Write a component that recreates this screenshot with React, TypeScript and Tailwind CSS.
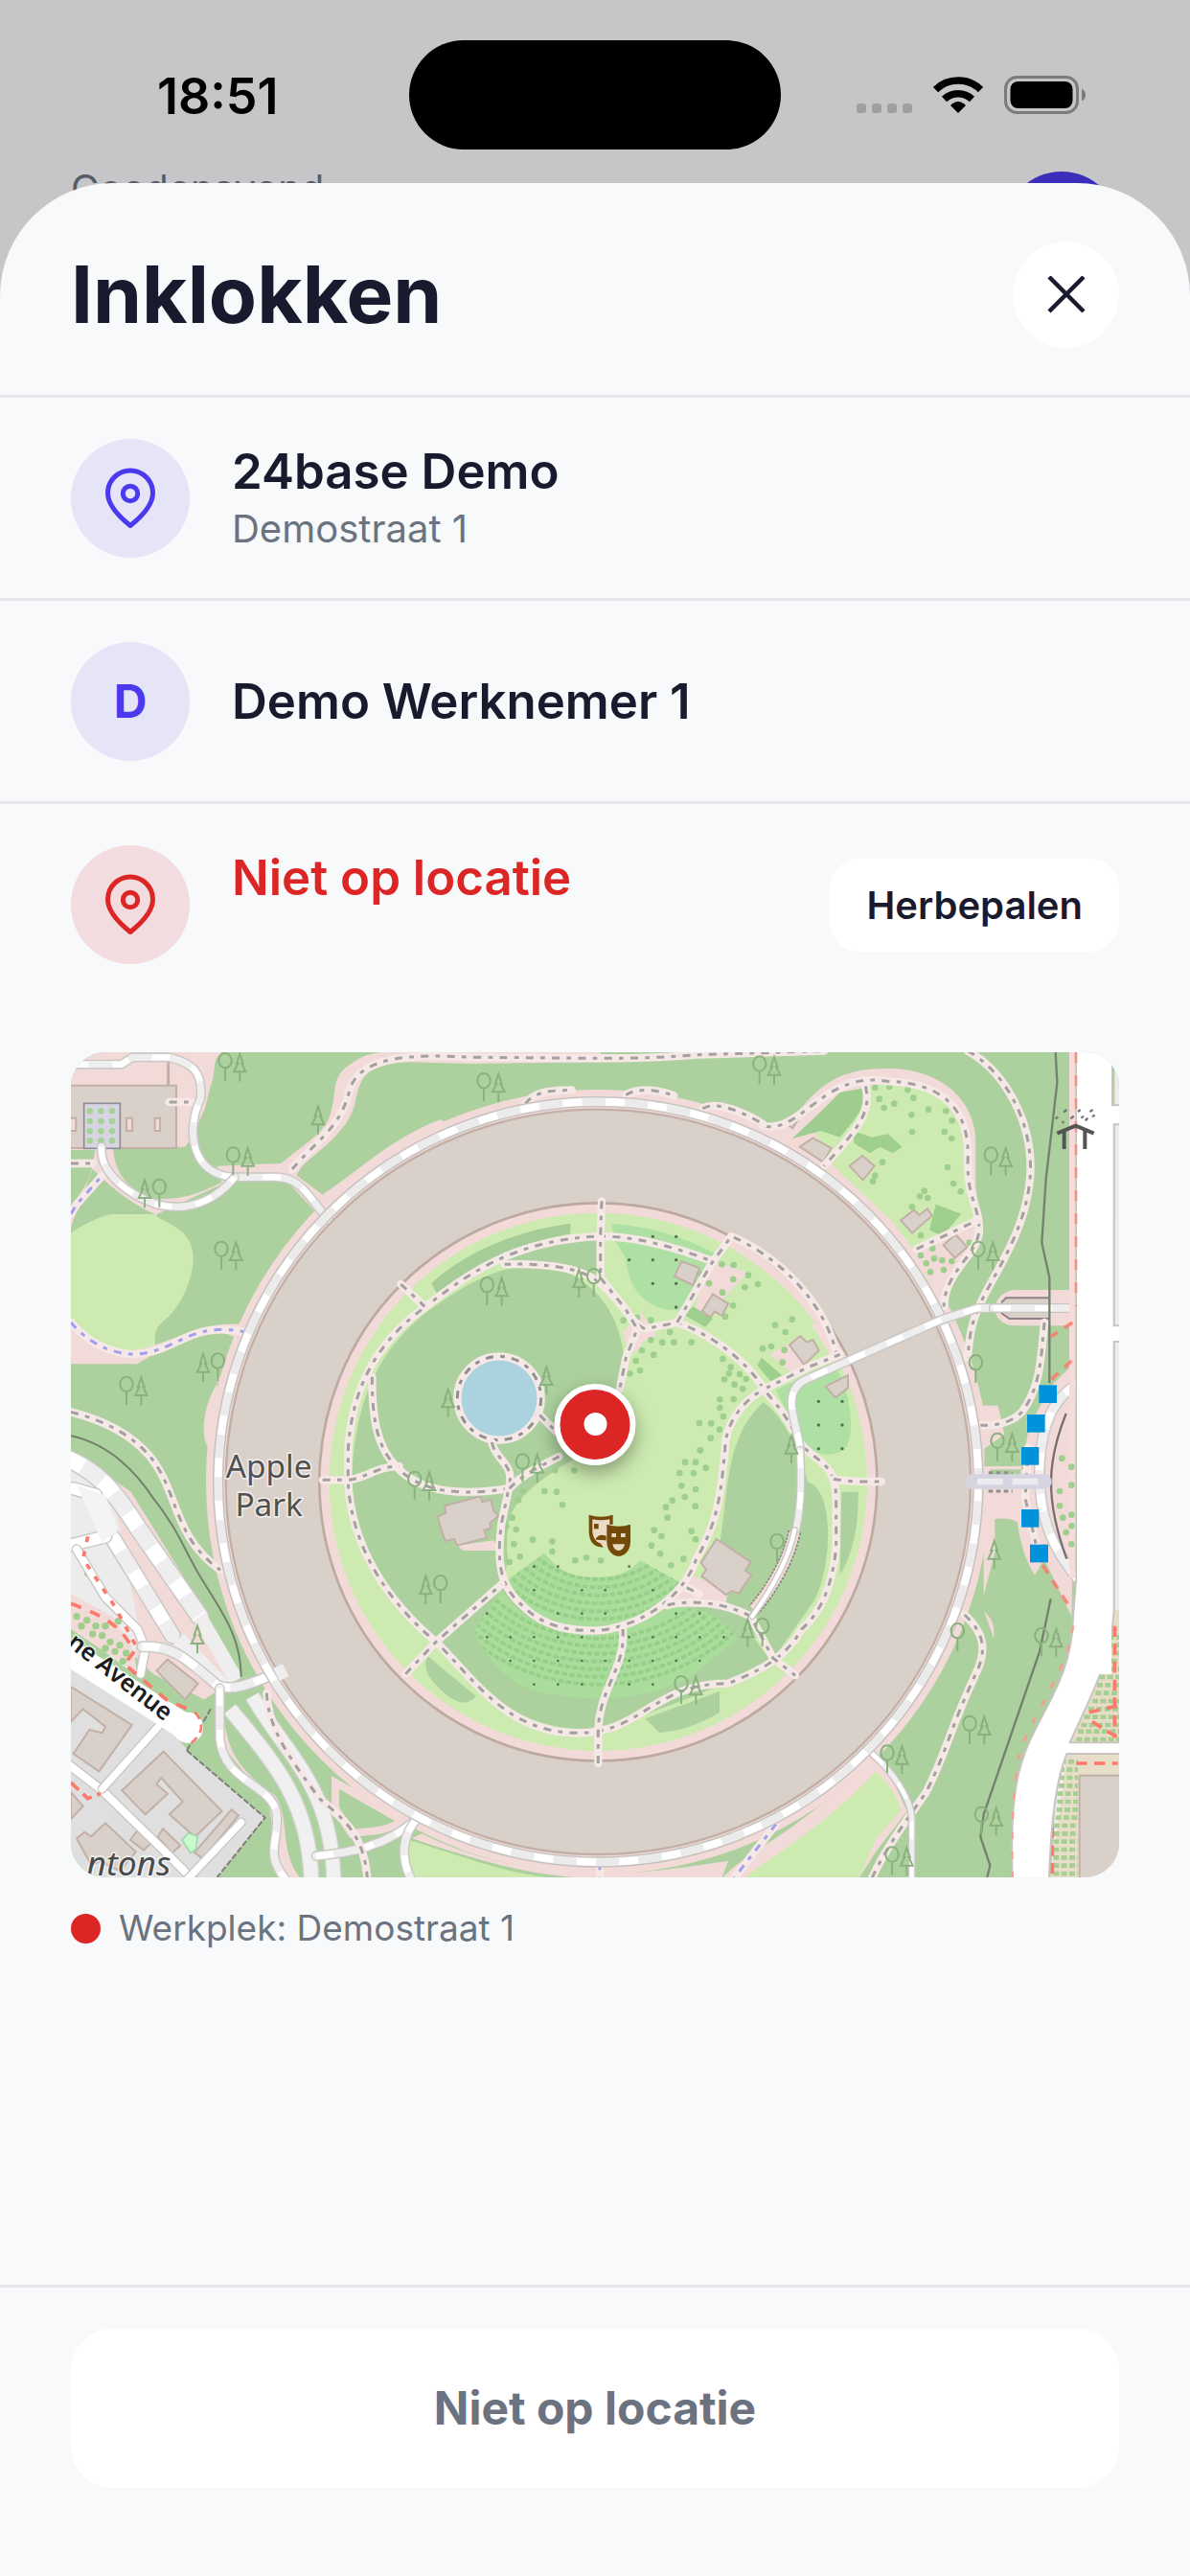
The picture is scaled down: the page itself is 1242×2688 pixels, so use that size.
import type { ReactNode } from "react";

const WOOD = "#add19e";
const GRASS = "#cdebb0";
const PLAZA = "#f2dad9";
const BUILDING = "#d9d0c9";
const BUILDING_EDGE = "#c2b0a6";
const GARDEN = "#aedfa3";
const SHRUB = "#9fcf8c";

/* ---------- Map primitives ---------- */

function Footpath({ d, color = "#8f8f8f" }: { d: string; color?: string }) {
  return (
    <>
      <path d={d} fill="none" stroke="#f5e8e6" strokeWidth="25" strokeLinecap="round" strokeLinejoin="round" />
      <path d={d} fill="none" stroke={color} strokeWidth="9" strokeDasharray="24 22 14 22" opacity="0.8" />
    </>
  );
}

function Road({ d, w = 24, dashed = true }: { d: string; w?: number; dashed?: boolean }) {
  return (
    <>
      <path d={d} fill="none" stroke="#c9c6c3" strokeWidth={w + 8} strokeLinecap="round" strokeLinejoin="round" />
      <path d={d} fill="none" stroke={dashed ? "#eeeeee" : "#ffffff"} strokeWidth={w} strokeLinecap="round" strokeLinejoin="round" />
      {dashed && <path d={d} fill="none" stroke="#ffffff" strokeWidth={w - 4} strokeDasharray="55 75" />}
    </>
  );
}

function Oak({ x, y }: { x: number; y: number }) {
  return (
    <path
      d={`M${x + 23} ${y + 2}a20 23 0 1 0 .1 0M${x + 23} ${y + 48}v41`}
      fill="none"
      stroke="#8bb27e"
      strokeWidth="6"
    />
  );
}

function Pine({ x, y }: { x: number; y: number }) {
  return (
    <path
      d={`M${x + 23} ${y + 4}l-10 30h4l-13 26h38l-13 -26h4zM${x + 23} ${y + 60}v31`}
      fill="none"
      stroke="#8bb27e"
      strokeWidth="6"
    />
  );
}

function Trees({ x, y, flip = false }: { x: number; y: number; flip?: boolean }) {
  return (
    <>
      <Oak x={flip ? x + 46 : x} y={y} />
      <Pine x={flip ? x : x + 46} y={y} />
    </>
  );
}

function Dots({ at, r = 10, fill = SHRUB }: { at: number[][]; r?: number; fill?: string }) {
  return (
    <g fill={fill}>
      {at.map(([x, y]) => (
        <circle key={`${x}-${y}`} cx={x} cy={y} r={r} />
      ))}
    </g>
  );
}

function Building({ d }: { d: string }) {
  return <path d={d} fill={BUILDING} stroke={BUILDING_EDGE} strokeWidth="6" />;
}

const seatRows = [305, 330, 355, 380, 405, 430, 490, 514, 538, 562, 586, 610, 634];
const coverDots = [
  [352, 404], [427, 404], [650, 404], [352, 478], [502, 478], [575, 478], [724, 478], [205, 551], [427, 551], [502, 551],
  [575, 551], [797, 551], [871, 551], [205, 625], [278, 625], [352, 625], [427, 625], [502, 625], [650, 625], [724, 625],
  [797, 625], [871, 625], [946, 625], [278, 699], [352, 699], [427, 699], [502, 699], [575, 699], [650, 699], [724, 699],
  [797, 699], [871, 699], [352, 773], [427, 773], [502, 773], [650, 773], [724, 773],
];

function ParkMap() {
  return (
    <svg
      viewBox="42 54 3282 2583"
      preserveAspectRatio="xMidYMid slice"
      className="block h-[861px] w-full"
      role="img"
      aria-label="Kaart van Apple Park"
    >
      <rect x="42" y="54" width="3282" height="2583" fill={WOOD} />

      {/* north-west gardens */}
      <path d="M42 54H515C480 80 500 110 478 165L462 230 420 320 400 350 175 356C178 430 220 480 290 512 400 520 450 490 515 462L500 410 700 402C760 350 830 310 850 260 880 180 850 130 920 90 950 65 980 60 1010 54H1700V85L1300 90 1100 85C960 90 950 130 930 220 900 330 760 390 750 440L830 500C950 420 1050 320 1200 265L1290 320 870 600 720 700C660 780 600 850 580 910L560 950C500 910 420 940 300 1000L250 1030H42V620Q100 580 165 562H310C250 540 180 490 110 420L42 600Z" fill={PLAZA} />
      <path d="M42 360H118L105 430C90 480 60 500 42 560Z" fill={WOOD} />
      <path d="M515 400C560 380 640 360 700 402Z" fill={WOOD} />
      <path d="M310 562L540 455 720 460 815 560C700 680 620 790 570 905 460 900 400 940 305 970Z" fill={WOOD} />
      <path d="M42 620Q100 580 165 562H300C350 595 425 610 425 700 425 760 390 840 350 880 310 910 302 930 305 968 150 1030 80 960 42 900Z" fill={GRASS} />
      <path d="M42 54H440V160H42Z" fill={PLAZA} />
      <Building d="M30 158H372V354H30Z" />
      <rect x="83" y="214" width="113" height="141" fill="#d8d5e3" stroke="#8d8b97" strokeWidth="5" />
      <Dots
        r={10}
        fill="#a5d296"
        at={[[101, 238], [136, 238], [171, 238], [101, 270], [136, 270], [171, 270], [101, 301], [136, 301], [171, 301], [101, 331], [136, 331], [171, 331]]}
      />
      <g fill={PLAZA} stroke={BUILDING_EDGE} strokeWidth="6">
        <path d="M36 260h22v40H36zM216 260h18v40h-18zM305 260h16v40h-16z" />
      </g>
      <path d="M347 85V158" stroke={BUILDING_EDGE} strokeWidth="9" />

      {/* pink verge around the ring */}
      <circle cx="1693" cy="1399" r="1228" fill={PLAZA} />
      <path d="M520 1070C470 1110 440 1240 470 1290L500 1380V1070Z" fill={PLAZA} />

      {/* north-east gardens */}
      <g transform="translate(2190 0)">
        <path d="M-90 290C40 290 90 280 130 240 200 150 270 105 400 105 560 100 680 190 685 330V470C690 540 712 560 708 620 700 700 620 730 600 780V860L570 900 540 830 300 500 0 300Z" fill={PLAZA} />
        <path d="M180 300C230 200 330 150 440 150 580 160 650 220 655 330L660 480 690 570 490 672 430 590 240 410Z" fill={GRASS} />
        <path d="M110 325L200 240 260 180 340 165C340 230 310 260 260 320L200 300Z" fill="#9fcc8f" />
        <path d="M300 300l60 20 50 -10 45 40-30 20-40-20-30 20-50-30zM560 530l80 30-60 70-40-20z" fill={SHRUB} />
        <Dots
          at={[[370, 165], [415, 162], [383, 200], [430, 215], [398, 228], [472, 172], [490, 197], [537, 233], [484, 250], [592, 238], [611, 268], [486, 303], [587, 303], [610, 324], [393, 398], [370, 440], [363, 458], [597, 414], [615, 465], [638, 490], [486, 538], [513, 627], [510, 505], [535, 510], [524, 488], [513, 690], [530, 715], [555, 700], [543, 742], [580, 705], [585, 735], [610, 708], [550, 668], [665, 650]]}
        />
        <Building d="M135 350l40-28 58 32-26 44zM290 410l40-32 38 32-36 44zM450 580l42-32 16 16 26-20 14 22-62 54zM584 658l38-34 36 40-38 34zM96 280l20-32 16 10-20 34z" />
      </g>

      {/* east side */}
      <g transform="translate(2190 0)">
        <path d="M985 798H810C730 800 720 910 810 910H985Z" fill={PLAZA} />
        <path d="M918 822H775L765 840V870L790 888H918Z" fill={BUILDING} />
        <path d="M765 838L780 823H918M765 870L790 888H918" fill="none" stroke="#8d8289" strokeWidth="6" />
        <path d="M990 1030L920 1100 850 1230 820 1400H700V1160H755L775 1250 720 1330H835L850 1360H710V1800L745 1900 900 1640 985 1820 1000 1100Z" fill={PLAZA} />
        <path d="M745 1515Q790 1510 815 1525C830 1620 850 1680 925 1760L985 1825 930 2000 740 1900C750 1840 730 1820 700 1795L745 1620Z" fill={WOOD} />
        <path d="M712 1295L775 1250 850 1240 828 1350H712Z" fill={WOOD} />
      </g>

      {/* south lawns */}
      <path d="M1110 2515C1300 2580 1500 2640 1700 2640L2080 2640 2100 2585C2000 2600 1850 2625 1700 2625 1500 2625 1300 2580 1140 2500Z" fill={PLAZA} />
      <path d="M2080 2640C2150 2560 2350 2480 2550 2260L2600 2300 2660 2430 2560 2560 2510 2640Z" fill={PLAZA} />
      <path d="M1100 2640V2520C1300 2580 1400 2625 1560 2640ZM2150 2640C2250 2560 2400 2480 2562 2305 2600 2340 2630 2380 2640 2430L2560 2520 2510 2640Z" fill={GRASS} />

      {/* south-west corner */}
      <path d="M42 1300L230 1430 460 1800 560 2000 480 2090 300 2000 42 1750Z" fill={PLAZA} />
      <path d="M42 1335L120 1360 190 1520 250 1830 240 2000 42 1850Z" fill="#ececec" />
      <path d="M42 1950L330 2150 410 2240 650 2450 500 2640H42Z" fill="#dfdfdf" />
      <path d="M405 2240L480 2110 400 2120 520 2040 560 2200 720 2400 760 2640H500L650 2450Z" fill={WOOD} />
      <path d="M520 2120C530 2270 600 2320 680 2380 730 2440 690 2550 760 2640H700L660 2400 520 2230Z" fill={PLAZA} />
      <path d="M405 2240L650 2450 500 2637M480 2110L405 2240" fill="none" stroke="#7f7f7a" strokeWidth="6" strokeDasharray="20 6" />
      <Building d="M42 2040L233 2160 130 2305 50 2250 100 2175 140 2185 150 2165 80 2110 42 2150Z" />
      <Building d="M332 2243L515 2430 430 2510 350 2440 392 2400 325 2325 310 2345 345 2375 275 2440 202 2365Z" />
      <Building d="M545 2425l22 18-112 136-26-20zM60 2515l25-20 20 14 45-42 95 90-50 60-60-30-30 10zM250 2490l42 40-22 22-42-32zM330 2485l55 52-26 24-45-50zM42 2370l38 44-38 40z" />
      <path d="M390 2520l20-22 28 10-4 42-18 10z" fill="#c8facc" stroke="#a0d8b0" strokeWidth="5" />
      <path d="M42 1750l130 70 60 90 20 90L42 1860Z" fill={PLAZA} />
      <Dots
        r={11}
        at={[[60, 1820], [92, 1832], [120, 1850], [75, 1850], [110, 1875], [140, 1880], [165, 1900], [150, 1850], [190, 1835], [195, 1910], [180, 1930], [205, 1960], [150, 1920], [215, 1935], [95, 1685], [125, 1400], [145, 1440], [75, 1370]]}
      />
      <Road d="M30 1325C130 1370 180 1430 250 1540L445 1820" w={52} />
      <Road d="M170 1570L360 1880" w={46} />
      <Road d="M30 1600L150 1570 120 1440 50 1420" w={36} dashed={false} />
      <Road d="M60 1610L150 1760 250 1860 275 1920 260 2000" w={24} dashed={false} />
      <path d="M60 1410l90 30 40 110-50 40z" fill="#f4f4f4" />
      <Road d="M30 2280L140 2365 330 2550 430 2650" w={24} dashed={false} />
      <Road d="M140 2360L320 2160" w={22} dashed={false} />
      <Road d="M400 2650L575 2465" w={22} dashed={false} />
      <path d="M30 1930L390 2160" stroke="#ffffff" strokeWidth="80" />
      <circle cx="408" cy="2168" r="48" fill="#ffffff" />
      <path d="M42 1780C150 1820 200 1850 240 1930L210 1970 340 2080 430 2120" fill="none" stroke="#fb7a6b" strokeWidth="11" strokeDasharray="34 30" />
      <path d="M95 1570L80 1640 180 1790 250 1920" fill="none" stroke="#fb7a6b" strokeWidth="11" strokeDasharray="18 28" />
      <path d="M42 2340L95 2390 135 2375" fill="none" stroke="#fb7a6b" strokeWidth="11" strokeDasharray="34 18" />
      <path d="M430 2120Q475 2170 420 2215" fill="none" stroke="#fb7a6b" strokeWidth="8" strokeDasharray="26 18" />

      {/* service roads south of the ring */}
      <path d="M450 1830L560 2020M380 1890L520 2040" stroke="#eeeeee" strokeWidth="46" />
      <path d="M540 2110C680 2280 790 2400 795 2650" fill="none" stroke="#d2d2d0" strokeWidth="52" />
      <path d="M540 2110C680 2280 790 2400 795 2650" fill="none" stroke="#f0f0f0" strokeWidth="44" />
      <path d="M610 2070C720 2260 860 2350 865 2650" fill="none" stroke="#d2d2d0" strokeWidth="50" />
      <path d="M610 2070C720 2260 860 2350 865 2650" fill="none" stroke="#f0f0f0" strokeWidth="42" />
      <Building d="M310 1990L345 1955 440 2030 400 2080Z" />
      <Road d="M265 1915C360 1910 400 1950 500 2035 540 2055 600 2035 690 1995" w={28} />
      <Road d="M508 2045V2200C520 2340 660 2340 685 2430 700 2520 640 2560 720 2650" w={24} />
      <path d="M870 2340L1080 2460C1020 2500 970 2490 920 2500L870 2420Z" fill={WOOD} stroke={PLAZA} strokeWidth="24" />
      <Road d="M810 2570C920 2560 1030 2540 1130 2450" w={24} />
      <Road d="M1130 2450C1080 2500 1070 2570 1110 2650" w={24} />
      <Footpath d="M655 2060C660 2180 740 2280 820 2390 890 2450 960 2500 970 2640" />
      <path d="M42 1255C160 1280 240 1360 300 1450 380 1550 400 1620 450 1700 510 1800 575 1880 575 2010" fill="none" stroke="#74816d" strokeWidth="6" />
      <Footpath d="M42 1180C160 1210 240 1260 290 1320 380 1430 360 1570 510 1675" />

      {/* footpaths outside the ring */}
      <Footpath d="M735 420C800 340 890 290 915 170 950 60 1130 60 1300 70 1600 70 1800 80 2000 62L2400 50" />
      <Footpath d="M2850 50C2960 110 3060 270 3045 450 3030 620 2930 750 2890 840 2860 900 2855 950 2850 1010" />
      <Footpath d="M2210 285C2330 310 2400 110 2600 145 2780 150 2860 240 2850 400 2850 520 2890 540 2885 620 2870 700 2780 740 2775 850" />
      <Footpath d="M2530 160C2550 240 2510 290 2400 410" />
      <Footpath d="M2690 670L2880 580" />
      <Footpath d="M1465 215C1500 170 1560 175 1610 172M1780 188C1810 165 1880 170 1930 190M2020 230C2070 200 2180 260 2210 280" />
      <Footpath color="#8c8cf0" d="M42 900C100 970 200 1020 300 990 400 960 440 900 590 930" />
      <Footpath color="#8c8cf0" d="M42 560L60 530 140 440" />
      <Footpath d="M42 402H110M350 210H420" />
      <Footpath d="M3090 900C3080 1000 3080 1100 3020 1180 2980 1220 2930 1222 2890 1222" />
      <Footpath d="M3040 1290L3030 1450 3070 1620" />
      <Footpath d="M2840 1815C2900 1870 2910 1920 2880 1990 2790 2180 2790 2230 2720 2370 2680 2430 2600 2530 2550 2640" />
      <Footpath color="#8c8cf0" d="M1698 2590V2650M2250 2470L2110 2650" />

      {/* lanes */}
      <Road d="M42 92H200L235 70H350C430 90 455 120 448 200 400 300 420 440 555 445H670C760 440 780 500 850 580" w={22} />
      <Road d="M138 350C130 430 220 500 310 530 430 560 510 500 555 445" w={22} />
      <Road d="M2545 2245C2620 2310 2670 2390 2675 2450V2650" w={16} />

      {/* the ring */}
      <circle cx="1693" cy="1399" r="1190" fill="none" stroke="#c4bfba" strokeWidth="34" />
      <circle cx="1693" cy="1399" r="1166" fill={BUILDING} stroke={BUILDING_EDGE} strokeWidth="7" />
      <circle cx="1693" cy="1399" r="1190" fill="none" stroke="#ebebeb" strokeWidth="26" />
      <circle cx="1693" cy="1399" r="1190" fill="none" stroke="#ffffff" strokeWidth="22" strokeDasharray="60 74" />
      <circle cx="1693" cy="1399" r="873" fill={PLAZA} stroke="#bda99f" strokeWidth="8" />
      <circle cx="1693" cy="1399" r="842" fill={GRASS} />

      {/* courtyard woods */}
      <path d="M1140 880C1300 760 1420 700 1560 730 1720 780 1780 930 1775 1060L1700 1250 1560 1400C1480 1450 1420 1560 1400 1700L1180 1900C1010 1720 920 1550 920 1400 930 1150 1000 1000 1140 880Z" fill={WOOD} />
      <path d="M1400 705C1500 660 1620 640 1695 640L1700 770C1620 720 1500 705 1400 705Z" fill={WOOD} />
      <path d="M1170 778C1290 670 1450 610 1606 590V622C1440 655 1320 720 1190 812Z" fill="#a6cd98" />
      <path d="M1195 1895L1400 1720 1430 1760C1560 1920 1850 1920 1960 1780L2100 1780 2235 1960C2080 2040 1850 2130 1700 2170 1480 2190 1340 2080 1195 1895Z" fill={WOOD} />
      <path d="M1160 1945L1310 2070C1280 2100 1260 2090 1230 2075 1160 2020 1140 1980 1160 1945ZM1840 2140L2073 2055V2120C2010 2160 1940 2180 1885 2184Z" fill={WOOD} />
      <path d="M2210 1150C2270 1190 2320 1290 2350 1400 2430 1420 2430 1650 2370 1770L2250 1940 2100 1800C2090 1750 2060 1650 2080 1550 2100 1400 2100 1250 2210 1150Z" fill={WOOD} />
      <path d="M2455 1430H2507C2510 1560 2480 1640 2450 1690Z" fill={WOOD} />
      <path d="M1735 590C1870 600 1980 640 2070 690L2050 712C1960 670 1850 640 1740 622Z" fill={GARDEN} />
      <path d="M1740 640C1860 650 1960 680 2040 705L1960 860C1880 870 1790 830 1780 700L1750 650Z" fill={GARDEN} />
      <path d="M2250 1110L2430 1030C2480 1100 2500 1240 2470 1290 2440 1320 2370 1330 2320 1260Z" fill={GARDEN} />
      <path d="M2040 700L2160 745 2080 830 1990 880Z" fill={PLAZA} />
      <path d="M2230 1000L2290 965 2350 1030 2300 1060Z" fill={PLAZA} />
      <path d="M2360 905L2400 900 2480 1020 2430 1020Z" fill={PLAZA} />
      <path d="M1770 930L1830 870 1880 950 1790 1000Z" fill={PLAZA} />
      <path d="M1960 1680L2100 1740 2090 1790H1930Z" fill={PLAZA} />
      <path d="M1420 1500C1470 1400 1600 1340 1760 1240L1830 960 1960 910C2090 960 2200 1060 2200 1110 2080 1250 2110 1350 2060 1560 1990 1720 1900 1860 1690 1865 1520 1860 1360 1720 1420 1500Z" fill={GRASS} />

      {/* open-air theatre */}
      <clipPath id="theatre">
        <path d="M1410 1705L1525 1622C1580 1690 1620 1697 1700 1697 1760 1697 1790 1680 1825 1645L1960 1720C1900 1820 1800 1870 1690 1870 1560 1870 1470 1810 1410 1705ZM1305 1865L1390 1735C1450 1830 1540 1880 1690 1875 1780 1870 1860 1810 1920 1790 2020 1790 2080 1820 2130 1890L1980 2010C1850 2080 1700 2090 1560 2065 1450 2060 1350 1980 1305 1865Z" />
      </clipPath>
      <g clipPath="url(#theatre)">
        <rect x="1280" y="1580" width="900" height="540" fill="#aadd9c" />
        {seatRows.map((r) => (
          <circle key={r} cx="1693" cy="1399" r={r} fill="none" stroke="#97cf88" strokeWidth="11" strokeDasharray="17 7" />
        ))}
      </g>
      <g transform="translate(1140 1260)">
        <Dots at={coverDots} r={4} fill="#54704e" />
      </g>

      {/* courtyard shrubs */}
      <g transform="translate(1140 0)">
        <Dots r={5} fill="#54704e" at={[[724, 631], [797, 631], [650, 704], [724, 704], [797, 704], [724, 778], [797, 778], [797, 852], [1243, 1147], [1317, 1147], [1243, 1221], [1317, 1221], [1243, 1295], [1317, 1295]]} />
        <Dots
          at={[[628, 855], [675, 885], [632, 893], [718, 893], [778, 930], [718, 955], [754, 962], [790, 962], [845, 962], [690, 987], [727, 1001], [671, 1020], [684, 1050], [652, 1060], [943, 1014], [968, 1040], [996, 1062], [1016, 1077], [963, 1060], [948, 1078], [980, 1094], [1006, 1108], [934, 1141], [977, 1140], [934, 1167], [945, 1194], [870, 1215], [907, 1216], [933, 1235], [905, 1262], [872, 1300], [940, 718], [977, 720], [976, 765], [1023, 752], [1012, 790], [1053, 780], [942, 806], [975, 847], [951, 881], [875, 748], [900, 778], [1107, 908], [1160, 890], [1139, 930], [1095, 975], [1068, 982], [1136, 986], [1130, 1025]]}
        />
        <path d="M850 850l62 38-24 26-66-38zM1065 1010l64 56-36 18-42-50z" fill={SHRUB} />
        <Building d="M792 755l22-46 56 20-20 54zM878 865l34-54 48 30-20 38-22-14-14 18zM1152 970l34-28 20 20 20-8 18 34-46 44z" />
        <Building d="M1265 1100l70-35v40l-40 30z" />
      </g>
      <g transform="translate(1140 1260)">
        <Dots
          at={[[418, 103], [478, 103], [385, 168], [423, 170], [441, 211], [318, 168], [303, 196], [284, 251], [265, 278], [296, 288], [348, 320], [409, 325], [289, 334], [409, 357], [308, 373], [275, 390], [481, 385], [516, 376], [561, 385], [873, 40], [825, 77], [858, 77], [808, 111], [852, 112], [890, 95], [814, 151], [858, 162], [824, 186], [785, 197], [765, 218], [857, 215], [770, 251], [728, 290], [751, 309], [845, 293], [858, 319], [720, 338], [747, 364], [820, 380], [781, 400]]}
        />
        <path d="M112 338L225 322 250 354H130Z" fill={PLAZA} />
        <Building d="M50 248l26-12-4-22 112-30 6 18 26-8 10 34 14 18-26 22 2 16-20 6 8 24-92 24-10-20-28 6-10-30z" />
        <Building d="M923 318l108 72-18 26 20 14-40 58-20-8-20 12-76-58 14-20-16-22z" />
      </g>

      {/* pond */}
      <circle cx="1383" cy="1137" r="131" fill="#aad3df" stroke="#f5e8e6" strokeWidth="25" />
      <circle cx="1383" cy="1137" r="131" fill="none" stroke="#8f8f8f" strokeWidth="9" strokeDasharray="24 22 14 22" />

      {/* courtyard footpaths */}
      <Footpath d="M1140 860C1270 760 1420 640 1700 630 1820 630 1950 670 2055 710" />
      <Footpath d="M1140 860C980 980 920 1130 910 1300V1400C920 1600 1030 1770 1185 1900 1300 2010 1400 2180 1620 2185 1830 2190 1860 2030 2100 2030 2200 1990 2280 1950 2330 1860 2400 1800 2430 1700 2438 1600V1460C2440 1330 2370 1340 2320 1270 2270 1160 2220 1130 2200 1090 2120 980 2000 920 1940 900L1840 920C1790 900 1760 820 1690 770 1620 720 1500 715 1400 718" />
      <Footpath d="M1704 520L1700 630V760M1700 760L1780 860 1815 920 1780 1010 1760 1110" />
      <Footpath d="M1940 900L2050 712 2110 630C2250 690 2400 830 2440 1000" />
      <Footpath d="M2210 1110L2350 1040 2450 1000" />
      <Footpath d="M1075 780L1150 850M985 1070C985 1200 1000 1290 1060 1350 1140 1440 1280 1440 1410 1420" />
      <Footpath d="M830 1393H910C960 1390 1000 1350 1070 1350" />
      <Footpath d="M1360 1275C1370 1330 1430 1340 1415 1410L1390 1530C1370 1680 1400 1740 1460 1790 1530 1860 1620 1865 1690 1865 1830 1850 1960 1760 2000 1640 2080 1510 2080 1380 2090 1300 2090 1220 2140 1150 2210 1110" />
      <Footpath d="M1510 1190L1560 1240M1415 1420C1450 1380 1510 1350 1570 1320" />
      <Footpath d="M1090 2000L1185 1900 1390 1720" />
      <Footpath d="M1693 2280V2170C1700 2040 1780 1980 1770 1860" />
      <Footpath d="M1910 1785C1960 1770 2080 1770 2170 1820L2240 1950 2310 2005" />
      <Footpath d="M1970 1730L2010 1750M2430 1390C2480 1400 2540 1398 2580 1398" />

      {/* ring crossing */}
      <Road d="M2325 1300C2320 1220 2260 1120 2340 1080L2770 890 2880 855H2940" w={22} />
      <Road d="M2325 1300C2330 1400 2330 1500 2305 1570" w={20} />
      <path d="M2308 1555C2290 1640 2240 1730 2180 1800" fill="none" stroke="#8a7f7c" strokeWidth="42" strokeDasharray="7 5" />
      <path d="M2308 1555C2290 1640 2240 1730 2180 1800" fill="none" stroke={PLAZA} strokeWidth="32" />
      <Road d="M2308 1550C2290 1640 2240 1730 2175 1820" w={13} dashed={false} />
      <Road d="M2930 855H3200" w={22} />
      <path d="M690 1975l20 40" stroke="#eeeeee" strokeWidth="32" />

      {/* east roads */}
      <Road d="M3200 1090C3120 1130 3080 1220 3075 1350 3070 1500 3110 1610 3210 1720" w={28} />
      <path d="M3158 1185C3100 1330 3090 1450 3160 1640" fill="none" stroke="#77706e" strokeWidth="7" />
      <path d="M2865 1398H3090" stroke="#d5d4e0" strokeWidth="46" strokeLinecap="round" />
      <path d="M2880 1398H3080" stroke="#ececf0" strokeWidth="20" strokeDasharray="80 30" />
      <path d="M2915 1370H2990M2915 1428H2990" stroke="#8f8f8f" strokeWidth="9" strokeDasharray="14 10" />
      <path d="M3125 54L3130 150 3115 280 3095 450 3082 650 3106 760V1090M3110 1765L3075 1930 2900 2440 2890 2510 2920 2600 2910 2640" fill="none" stroke="#74816d" strokeWidth="7" />
      <path d="M3170 54H3330V2640H3110L3130 2300 3200 2100 3280 1900 3310 1600V54Z" fill="#f0ecea" />
      <path d="M3178 54V1700" stroke="#f5dcda" strokeWidth="20" />
      <path d="M3178 900L3110 945M3175 1020L3110 1080M3085 1660L3175 1800" fill="none" stroke="#fb7a6b" strokeWidth="11" strokeDasharray="30 26" opacity="0.85" />
      <path d="M3330 1800H3300L3240 2070 3160 2220H3330Z" fill="#e6ddc6" />
      <path d="M3330 2250H3160L3110 2640H3330Z" fill="#e8ddc8" />
      <g stroke="#a8cf93" strokeWidth="14" strokeDasharray="18 7">
        <path d="M3300 1860H3330M3290 1885H3330M3285 1910H3330M3280 1935H3330M3275 1960H3330M3270 1985H3330M3262 2010H3330M3255 2035H3330M3250 2060H3330M3240 2085H3330M3228 2110H3330M3215 2135H3330M3205 2160H3330M3195 2180H3330M3190 2205H3330" />
        <path d="M3140 2275H3195M3135 2300H3195M3135 2325H3195M3135 2350H3195M3130 2375H3195M3130 2400H3195M3128 2425H3195M3125 2450H3195M3120 2475H3195M3120 2500H3195M3118 2525H3195M3118 2550H3195M3118 2575H3195M3118 2600H3195M3118 2625H3195" />
      </g>
      <Building d="M3200 2318H3340V2650H3200Z" />
      <path d="M3310 1850V2200M3230 2120L3320 2100M3240 2150L3320 2200M3190 2280H3320M3115 2480V2640" fill="none" stroke="#fb7a6b" strokeWidth="11" strokeDasharray="34 22" />
      <Dots at={[[3145, 1325], [3175, 1352], [3175, 1409], [3138, 1428], [3138, 1474], [3175, 1502], [3148, 1511], [3175, 1537], [3158, 1557], [3175, 1594]]} />
      <path d="M3190 54H3302V220H3330V280H3308V910H3330V960H3308V1800C3300 1960 3230 2080 3170 2215H3330V2250H3160C3120 2350 3110 2500 3105 2640H2990C2985 2500 2990 2350 3025 2260 3060 2140 3180 2020 3180 1820L3190 1700Z" fill="#ffffff" stroke="#c9c4c2" strokeWidth="6" />
      <path d="M3192 54H3300V2000H3192Z" fill="#ffffff" />
      <path d="M3189 54V850" stroke="#fb7a6b" strokeWidth="8" strokeDasharray="34 38" opacity="0.7" />
      <path d="M3180 1850C3160 2000 3040 2140 3010 2260 2990 2350 2988 2500 2990 2640" fill="none" stroke="#fb9a90" strokeWidth="7" strokeDasharray="22 40" />

      {/* picnic shelter */}
      <path d="M3130 308L3188 284 3245 308M3152 300V357M3217 300V357" fill="none" stroke="#555555" strokeWidth="12" />
      <path d="M3125 262l8-6M3150 242l10-8M3145 270l6 6M3172 262l10-8M3195 240l8-6M3218 268l8-8M3232 240l10-6M3240 256l8-6M3205 260l8-6" stroke="#777777" strokeWidth="7" />

      {/* bollards */}
      <g fill="#0092da">
        <rect x="3073" y="1096" width="56" height="56" />
        <rect x="3036" y="1188" width="56" height="56" />
        <rect x="3018" y="1290" width="55" height="56" />
        <rect x="3018" y="1485" width="55" height="56" />
        <rect x="3045" y="1595" width="57" height="56" />
      </g>

      {/* theatre masks */}
      <path d="M1666 1506q37 12 72 0v90q-30 16-48 0-24-10-24-44z" fill="#ead9c4" />
      <g fill="#734a08">
        <path d="M1664 1502q37 12 75 0v30h-10v-16q-28 6-54 0v40q4 30 26 36l8 12q-45 0-45-52z" />
        <rect x="1680" y="1530" width="14" height="16" />
        <path d="M1684 1580q10-22 34-12v14z" />
        <path d="M1720 1532q37 12 74 0v54q-2 40-37 46-35-6-37-46z" />
      </g>
      <path d="M1735 1560h14v12h-14zM1764 1560h14v12h-14zM1738 1594h38q-4 20-19 20t-19-20z" fill="#ead9bd" />

      <Trees x={502} y={55} />
      <Pine x={793} y={220} />
      <Trees x={527} y={350} />
      <Trees x={250} y={450} flip />
      <Trees x={490} y={645} />
      <Trees x={433} y={995} flip />
      <Trees x={193} y={1068} />
      <Trees x={1312} y={118} />
      <Trees x={2175} y={65} />
      <Trees x={1322} y={757} />
      <Trees x={1610} y={730} flip />
      <Pine x={1508} y={1035} />
      <Pine x={1200} y={1105} />
      <Trees x={2900} y={350} />
      <Trees x={2860} y={645} />
      <Oak x={2852} y={1000} />
      <Trees x={2920} y={1245} />
      <Trees x={1130} y={1690} flip />
      <Trees x={1095} y={1365} />
      <Trees x={1433} y={1310} />
      <Oak x={2230} y={1560} />
      <Trees x={2138} y={1825} flip />
      <Trees x={1930} y={2005} />
      <Pine x={2275} y={1250} />
      <Oak x={2795} y={1840} />
      <Pine x={2910} y={1580} />
      <Trees x={3058} y={1855} />
      <Trees x={2833} y={2130} />
      <Trees x={2575} y={2222} />
      <Trees x={2870} y={2415} />
      <Trees x={2590} y={2540} />
      <Pine x={415} y={1845} />

      <g
        fontFamily="'Noto Sans', 'Open Sans', sans-serif"
        stroke="#ffffff"
        strokeOpacity="0.6"
        strokeWidth="10"
        strokeLinejoin="round"
        paintOrder="stroke"
      >
        <text x="662" y="1385" fontSize="100" textAnchor="middle" fill="#505050">Apple</text>
        <text x="662" y="1507" fontSize="100" textAnchor="middle" fill="#505050">Park</text>
        <text x="335" y="2150" fontSize="76" fontWeight="600" textAnchor="end" fill="#1c1c1c" transform="rotate(38 335 2150)">ne Avenue</text>
        <text x="355" y="2632" fontSize="106" fontStyle="italic" textAnchor="end" fill="#4a4a4a">ntons</text>
      </g>
    </svg>
  );
}

/* ---------- Icons ---------- */

function PinIcon() {
  return (
    <svg viewBox="0 0 72 72" className="size-[72px]" fill="none" stroke="currentColor" strokeWidth="5" strokeLinejoin="round" aria-hidden="true">
      <path d="M36 64.5C28.500 58.500 12.500 45 12.500 30.500a23.500 23.500 0 0 1 47 0C59.500 45 43.500 58.500 36 64.500Z" />
      <circle cx="36" cy="31" r="7.700" />
    </svg>
  );
}

function WifiIcon() {
  return (
    <svg viewBox="0 0 52 38" className="h-[38px] w-[52px]" fill="none" stroke="#000" strokeWidth="7.500" aria-hidden="true">
      <path d="M2.500 13.500a34 34 0 0 1 47 0" />
      <path d="M11.500 23.500a21 21 0 0 1 29 0" />
      <path d="M26 38L18 30q8-8 16 0Z" fill="#000" stroke="none" />
    </svg>
  );
}

function BatteryIcon() {
  return (
    <svg viewBox="0 0 86 40" className="h-[40px] w-[86px]" aria-hidden="true">
      <rect x="1.500" y="1.500" width="75" height="37" rx="12" fill="none" stroke="#7b7b7c" strokeWidth="3" />
      <rect x="6.500" y="6" width="65" height="28" rx="8" fill="#000" />
      <path d="M81 13.500q4 2 4 6.500t-4 6.500z" fill="#7b7b7c" />
    </svg>
  );
}

/* ---------- Layout ---------- */

function Row({ tint, badge, children }: { tint: string; badge: ReactNode; children: ReactNode }) {
  return (
    <div className="flex items-center gap-11 px-[74px] pt-[43px] pb-[42px]">
      <div className={`flex size-[124px] shrink-0 items-center justify-center rounded-full ${tint}`}>{badge}</div>
      {children}
    </div>
  );
}

export default function App() {
  return (
    <div className="flex min-h-screen flex-col bg-[#c6c6c8] font-['Inter',sans-serif] text-[#1a1a2e]">
      <header className="grid grid-cols-[1fr_388px_1fr] items-center pt-[42px] pb-[23px]">
        <time className="pt-1 pl-[164px] text-[52px] leading-none font-semibold text-black">18:51</time>
        <div className="h-[114px] rounded-[57px] bg-black" />
        <div className="flex items-center justify-end gap-[22px] pr-[108px]">
          <div className="flex h-[38px] items-end gap-[6px]">
            <span className="size-[10px] rounded-[3px] bg-[#a0a0a2]" />
            <span className="size-[10px] rounded-[3px] bg-[#a0a0a2]" />
            <span className="size-[10px] rounded-[3px] bg-[#a0a0a2]" />
            <span className="size-[10px] rounded-[3px] bg-[#a0a0a2]" />
          </div>
          <WifiIcon />
          <BatteryIcon />
        </div>
      </header>

      <div className="flex h-[120px] items-start justify-between px-[74px]" aria-hidden="true">
        <p className="text-[40px] leading-[36px] text-[#565d69]">Goedenavond</p>
        <div className="size-[120px] rounded-full bg-[#3a2dba]" />
      </div>

      <main
        role="dialog"
        aria-labelledby="sheet-title"
        className="relative -mt-[108px] flex grow flex-col rounded-t-[118px] bg-[#f7f9fb]"
      >
        <div className="flex items-center justify-between border-b-[3px] border-[#e5e7ec] px-[74px] pt-[61px] pb-[49px]">
          <h1 id="sheet-title" className="text-[82px] leading-none font-bold">Inklokken</h1>
          <button type="button" aria-label="Sluiten" className="flex size-[111px] items-center justify-center rounded-full bg-white">
            <svg viewBox="0 0 40 40" className="size-[40px]" fill="none" stroke="currentColor" strokeWidth="4.500" aria-hidden="true">
              <path d="M2 1l36 36M38 1L2 37" />
            </svg>
          </button>
        </div>

        <div className="divide-y-[3px] divide-[#e5e7ec]">
          <Row tint="bg-[#e5e5f7] text-[#4b3aed]" badge={<PinIcon />}>
            <div className="grow pt-1">
              <h2 className="text-[51px] leading-[60px] font-semibold">24base Demo</h2>
              <p className="text-[40px] leading-[60px] text-[#6b7280]">Demostraat 1</p>
            </div>
          </Row>
          <Row tint="bg-[#e5e5f7] text-[#4b3aed]" badge={<span className="text-[48px] leading-none font-bold">D</span>}>
            <h2 className="grow text-[51px] leading-[60px] font-semibold">Demo Werknemer 1</h2>
          </Row>
          <Row tint="bg-[#f3dcdf] text-[#dc2626]" badge={<PinIcon />}>
            <h2 className="grow self-start pt-1 text-[51px] leading-[60px] font-semibold text-[#dc2626]">Niet op locatie</h2>
            <button type="button" className="rounded-[31px] bg-white px-[38px] py-[24px] text-[40px] leading-[49px] font-semibold">
              Herbepalen
            </button>
          </Row>
        </div>

        <section className="px-[74px] pt-[50px]">
          <div className="relative overflow-hidden rounded-[36px]">
            <ParkMap />
            <div className="absolute bottom-1/2 left-1/2 flex size-[85px] -translate-x-1/2 items-center justify-center rounded-full border-[6px] border-white bg-[#dc2626] shadow-[0_8px_20px_rgba(0,0,0,0.35)]">
              <span className="size-[24px] rounded-full bg-white" />
            </div>
          </div>
          <p className="flex items-center gap-[19px] pt-[28px] text-[37px] leading-[50px] text-[#6b7280]">
            <span className="size-[31px] rounded-full bg-[#dc2626]" />
            Werkplek: Demostraat 1
          </p>
        </section>

        <footer className="mt-auto border-t-[3px] border-[#e5e7ec] px-[74px] pt-[43px] pb-[92px]">
          <button type="button" disabled className="h-[166px] w-full rounded-[43px] bg-white text-[48px] font-bold text-[#6b7280]">
            Niet op locatie
          </button>
        </footer>
      </main>
    </div>
  );
}
